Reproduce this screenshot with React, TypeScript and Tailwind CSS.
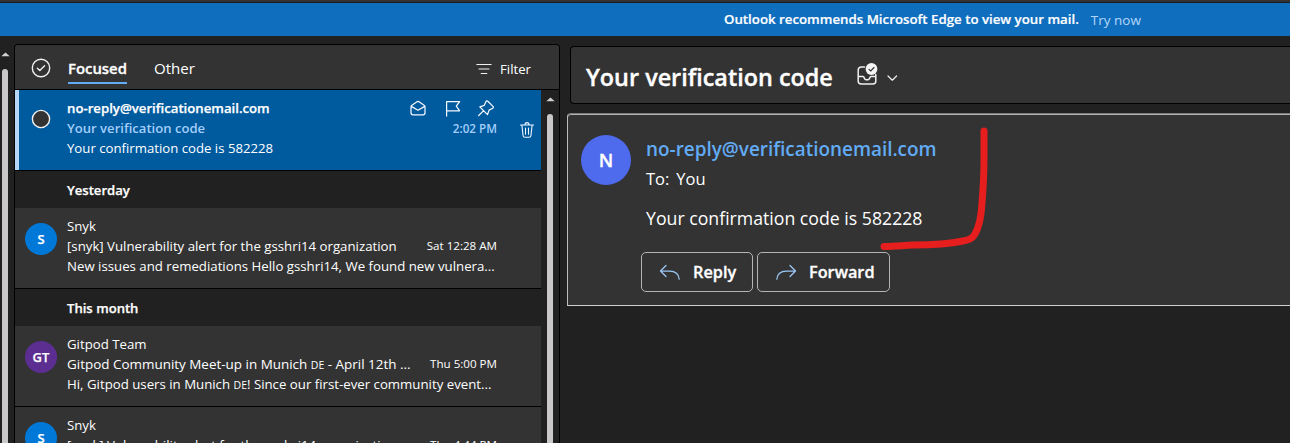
import type { ReactNode } from "react";

function ScrollBar({ className }: { className: string }) {
  return (
    <div className={`flex shrink-0 flex-col items-center ${className}`}>
      <svg width="9" height="5" viewBox="0 0 9 5" className="shrink-0">
        <path d="M4.5 0.5 8.7 4.2H0.3Z" fill="#d0d0d0" />
      </svg>
      <div className="mt-3 w-1.5 grow rounded-t-full bg-[#c9c7c7]" />
    </div>
  );
}

function Heading({ children }: { children: ReactNode }) {
  return (
    <div className="h-[37px] shrink-0 pl-[52px] text-[13.1px] font-semibold leading-[39px] text-white [-webkit-text-stroke:0.25px]">
      {children}
    </div>
  );
}

function Avatar({ initials, className }: { initials: string; className: string }) {
  return (
    <div
      className={`mt-[15px] flex size-8 shrink-0 items-center justify-center rounded-full text-[13px] font-semibold text-white [-webkit-text-stroke:0.25px] ${className}`}
    >
      {initials}
    </div>
  );
}

interface MailProps {
  initials: string;
  color: string;
  from: string;
  subject: ReactNode;
  time: string;
  preview: ReactNode;
}

function MailRow({ initials, color, from, subject, time, preview }: MailProps) {
  return (
    <div className="flex h-[81px] shrink-0 whitespace-nowrap border-b border-black bg-[#333333] pl-[10px] text-[13.24px] leading-5 text-white">
      <Avatar initials={initials} className={color} />
      <div className="ml-[10px] w-[430px] pt-2">
        <div className="h-5">{from}</div>
        <div className="flex h-5 justify-between">
          <span>{subject}</span>
          <span className="text-[11.6px]">{time}</span>
        </div>
        <div className="h-5">{preview}</div>
      </div>
    </div>
  );
}

const De = () => <span className="text-[10.5px] leading-none">DE</span>;

function ActionButton({ label, d, className }: { label: string; d: string; className: string }) {
  return (
    <button
      className={`flex h-10 items-center rounded-[5px] border border-[#b4b4b4] pl-[17px] text-[16.3px] font-semibold text-white [-webkit-text-stroke:0.3px] ${className}`}
    >
      <svg width="22" height="18" viewBox="0 0 22 18" fill="none" stroke="#9cc8f5" strokeWidth="1.25" strokeLinecap="round" strokeLinejoin="round">
        <path d={d} />
      </svg>
      <span className="ml-3 pt-px">{label}</span>
    </button>
  );
}

function MailList() {
  return (
    <section className="mt-2 flex w-[546px] shrink-0 flex-col overflow-hidden rounded-t-[4px] border border-b-0 border-black bg-[#212121]">
      <div className="flex h-[45px] shrink-0 items-start border-b border-black bg-[#333333] pl-4">
        <svg width="20" height="20" viewBox="0 0 20 20" fill="none" stroke="#f0f0f0" strokeWidth="1.4" className="mt-[13px]">
          <circle cx="10" cy="10" r="8.7" />
          <path d="m6.4 10.2 2.4 2.4 4.8-4.8" strokeLinecap="round" strokeLinejoin="round" />
        </svg>
        <div className="ml-[17px] mt-[11px] h-7 border-b-2 border-[#62abf5] text-[14.9px] font-semibold leading-6 text-white [-webkit-text-stroke:0.3px]">
          Focused
        </div>
        <div className="ml-[27px] mt-[11px] text-[15.1px] leading-6 text-white">Other</div>
        <div className="ml-auto mr-7 mt-3 flex h-6 items-center gap-[8px] text-[13.2px] text-white">
          <svg width="16" height="12" viewBox="0 0 16 12" stroke="#f0f0f0" strokeWidth="1.1" strokeLinecap="round">
            <path d="M.8 1.5h14.4M3 6h10M5.200 10.500h5.600" />
          </svg>
          <span className="pt-px">Filter</span>
        </div>
      </div>

      <div className="flex min-h-0 grow">
        <div className="flex w-[526px] flex-col overflow-hidden">
          <div className="flex h-[81px] shrink-0 whitespace-nowrap border-b border-black bg-[#005a9e] text-[13.2px] leading-5">
            <div className="mr-3 w-1 shrink-0 bg-[#b4d6fa]" />
            <svg width="20" height="20" viewBox="0 0 20 20" className="mt-[19px] shrink-0">
              <circle cx="10" cy="10" r="8.6" fill="#333" stroke="#f0f0f0" strokeWidth="1.4" />
            </svg>
            <div className="ml-4 w-[430px] pt-2">
              <div className="flex h-5 justify-between">
                <span className="font-semibold text-white [-webkit-text-stroke:0.25px]">no-reply@verificationemail.com</span>
                <svg width="87" height="20" viewBox="0 0 87 20" fill="none" stroke="#f4f8ff" strokeWidth="1.25" strokeLinejoin="round" strokeLinecap="round">
                  <path d="M1 8.800v6a2 2 0 0 0 2 2h10a2 2 0 0 0 2-2v-6c0-.7-.3-1.200-.9-1.500L8.600 3.600a1.200 1.200 0 0 0-1.200 0L1.900 7.300C1.300 7.600 1 8.100 1 8.800ZM1.300 8.400 8 12.300l6.700-3.900" />
                  <path d="M36.600 18V3.600h13L46.300 8.200l3.300 4.600h-13" />
                  <path d="m77.800 3.200 5.200 5.200c.6.6.5 1.500-.3 1.900l-3.600 1.800-1.600 4.500-7.700-7.700 4.500-1.600L76 3.600c.4-.8 1.200-1 1.800-.4ZM73.400 12.900l-4.700 4.600" />
                </svg>
              </div>
              <div className="flex h-5 justify-between font-semibold text-[#a3cefa]">
                <span className="text-[13.1px]">Your verification code</span>
                <span className="text-[11.7px]">2:02 PM</span>
              </div>
              <div className="text-white">Your confirmation code is 582228</div>
            </div>
            <svg width="16" height="18" viewBox="0 0 16 18" fill="none" stroke="#f0f6ff" strokeWidth="1.1" strokeLinecap="round" strokeLinejoin="round" className="ml-[22px] mt-[31px] shrink-0">
              <path d="M1.500 4h13M6 3.800C6 2.400 6.800 1.600 8 1.600s2 .8 2 2.200M2.900 4.200l1.200 10.600c.1.900.8 1.500 1.700 1.500h4.400c.9 0 1.600-.6 1.700-1.500l1.200-10.600M6.500 7v6.200M9.500 7v6.200" />
            </svg>
          </div>
          <Heading>Yesterday</Heading>
          <MailRow
            initials="S"
            color="bg-[#0078d7]"
            from="Snyk"
            subject="[snyk] Vulnerability alert for the gsshri14 organization"
            time="Sat 12:28 AM"
            preview="New issues and remediations Hello gsshri14, We found new vulnera..."
          />
          <Heading>This month</Heading>
          <MailRow
            initials="GT"
            color="bg-[#5c2e91]"
            from="Gitpod Team"
            subject={
              <span className="text-[13.45px]">
                Gitpod Community Meet-up in Munich <De /> - April 12th ...
              </span>
            }
            time="Thu 5:00 PM"
            preview={<>Hi, Gitpod users in Munich <De />! Since our first-ever community event...</>}
          />
          <MailRow
            initials="S"
            color="bg-[#0078d7]"
            from="Snyk"
            subject="[snyk] Vulnerability alert for the gsshri14 organization"
            time="Thu 4:44 PM"
            preview="New issues and remediations Hello gsshri14, We found new vulnera..."
          />
        </div>
        <ScrollBar className="w-[18px] pt-[7px]" />
      </div>
    </section>
  );
}

function ReadingPane() {
  return (
    <main className="min-w-0 grow overflow-hidden pl-[7px] pt-[10px]">
      <div className="ml-[3px] flex h-[58px] items-center rounded-l-[4px] border border-r-0 border-black bg-[#333333] pl-[15px] text-white">
        <h1 className="pt-[3px] text-[23.4px] font-semibold leading-8 [-webkit-text-stroke:0.35px]">
          Your verification code
        </h1>
        <svg width="44" height="28" viewBox="0 0 44 28" fill="none" stroke="#f0f0f0" strokeWidth="1.5" strokeLinecap="round" strokeLinejoin="round" className="ml-[22px]">
          <path d="M9.500 6H6.200a3 3 0 0 0-3 3v11a3 3 0 0 0 3 3h11.600a3 3 0 0 0 3-3v-6.500M3.200 15.400H8c.6 0 .9.3 1 .9.300 1.500 1.300 2.500 3 2.500s2.700-1 3-2.500c.1-.6.4-.9 1-.9h4.800" />
          <circle cx="16.500" cy="8" r="5.900" fill="#f5f5f5" stroke="none" />
          <path d="m14 8.400 1.700 1.600 3.300-3.500" stroke="#333" strokeWidth="1.100" />
          <path d="m33 15 4.300 4.200 4.300-4.200" strokeWidth="1.200" />
        </svg>
      </div>

      <article className="mt-[9px] flex h-[193px] rounded-tl-[4px] border border-r-0 border-b-[#d0d0d0] border-l-[#bdbdbd] border-t-[#7c7c7c] bg-[#333333] pl-[13px] shadow-[inset_0_1px_0_#b0b0b0]">
        <div className="mt-[21px] flex size-[50px] shrink-0 items-center justify-center rounded-full bg-[#4f6bed] text-[18.5px] font-semibold text-white [-webkit-text-stroke:0.3px]">
          N
        </div>
        <div className="pl-[15px] pt-[21px] text-white">
          <div className="text-[18.92px] font-semibold leading-[28px] text-[#62abf5]">
            no-reply@verificationemail.com
          </div>
          <div className="mt-1 flex gap-[7px] text-[16.5px] leading-6">
            <span>To:</span>
            <span>You</span>
          </div>
          <div className="mt-[15px] text-[17.7px] leading-6">Your confirmation code is 582228</div>
          <div className="-ml-[5px] mt-[22px] flex gap-1">
            <ActionButton
              label="Reply"
              className="w-[112px]"
              d="M7 2.500 1.500 8 7 13.500M1.800 8h8.700c5.500 0 9.300 3 9.700 8.200"
            />
            <ActionButton
              label="Forward"
              className="w-[133px]"
              d="M15 2.500 20.500 8 15 13.500M20.200 8h-8.700C6 8 2.200 11 1.800 16.200"
            />
          </div>
        </div>
      </article>
    </main>
  );
}

export default function App() {
  return (
    <div className="relative flex h-[443px] w-[1290px] flex-col overflow-hidden bg-[#212121] font-['Open_Sans','Noto_Sans',sans-serif]">
      <div className="h-[3px] shrink-0 border-b border-[#1c1c1c] bg-[#333333]" />
      <div className="flex h-[33px] shrink-0 items-center bg-[#106ebe] pl-[724px] pt-px text-white">
        <span className="text-[13.27px] font-semibold [-webkit-text-stroke:0.2px]">
          Outlook recommends Microsoft Edge to view your mail.
        </span>
        <span className="ml-3 text-[13.5px] text-[#b4d6fa]">Try now</span>
      </div>
      <div className="flex min-h-0 grow">
        <ScrollBar className="w-[14px] pr-[4px] pt-[16px]" />
        <MailList />
        <ReadingPane />
      </div>
      <svg width="120" height="130" viewBox="872 122 120 130" fill="none" className="absolute left-[872px] top-[122px]">
        <path
          d="M984 131v27c0 13-1 33-2 45-.8 15-3 24-7 31-3 5-6 6-12 7-14 3-31 4-50 4-10 .3-17 1.500-29 1.500"
          stroke="#e61e1e"
          strokeWidth="7"
          strokeLinecap="round"
          strokeLinejoin="round"
        />
      </svg>
    </div>
  );
}
